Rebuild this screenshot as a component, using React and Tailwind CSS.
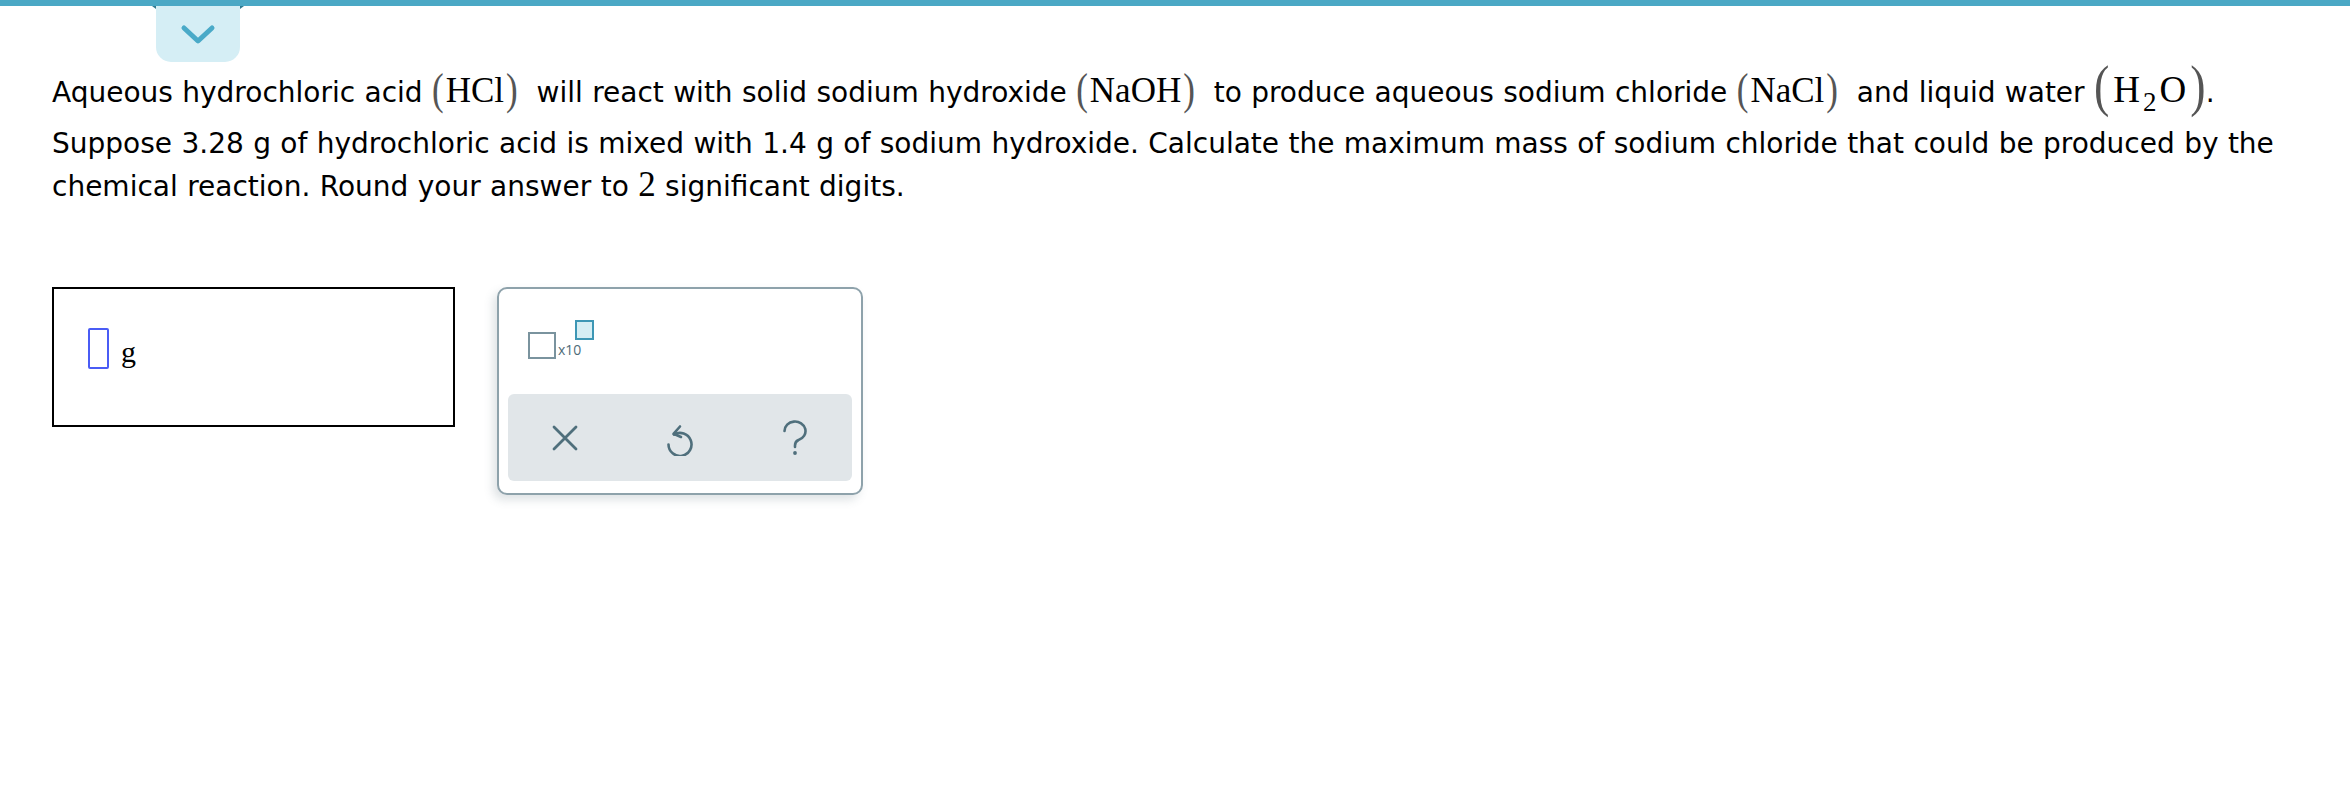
import React from 'react';

const sans = { fontFamily: '"DejaVu Sans", Verdana, sans-serif', wordSpacing: '0.5px' };

// stretched math parenthesis, drawn as text in the math font
const Paren = ({ ch, tall }) => (
  <span
    className={`inline-block leading-[20px] text-[#555] ${tall ? 'text-[46px] scale-y-[1.22] origin-[50%_60%]' : 'scale-y-[1.25] origin-[50%_62%]'}`}
  >
    {ch}
  </span>
);

const Chem = ({ children, tall }) => (
  <span className="font-['Liberation_Serif',serif] text-[35px] leading-none" style={{ wordSpacing: 0 }}>
    <Paren ch="(" tall={tall} />
    <span className={tall ? 'px-[4px] text-[37px] leading-[20px]' : 'px-[2px]'}>{children}</span>
    <Paren ch=")" tall={tall} />
  </span>
);

const TopTab = () => (
  <div className="absolute left-[152px] top-[6px] w-[92px] h-[56px]">
    <svg className="absolute left-0 top-0" width="92" height="3" viewBox="0 0 92 3">
      <polygon points="0,0 92,0 88,3 4,3" fill="#2f7a91" />
    </svg>
    <div className="absolute left-[4px] top-0 w-[84px] h-[56px] bg-[#d5eef5] rounded-b-[15px] flex items-center justify-center">
      <svg width="40" height="24" viewBox="0 0 40 24">
        <polyline points="6,6 20,19 34,6" fill="none" stroke="#4aaac8" strokeWidth="5" strokeLinecap="round" strokeLinejoin="round" />
      </svg>
    </div>
  </div>
);

const ClearIcon = () => (
  <svg width="26" height="26" viewBox="0 0 26 26">
    <path d="M2 2 L24 24 M24 2 L2 24" stroke="#4f6f7c" strokeWidth="2.8" strokeLinecap="round" />
  </svg>
);

const UndoIcon = () => (
  <svg width="30" height="36" viewBox="0 0 30 36">
    <path d="M3.5 24.5 A11.5 11.5 0 1 0 9 14.6" fill="none" stroke="#4f6f7c" strokeWidth="2.6" strokeLinecap="round" />
    <path d="M15 6.5 L8.5 13.8 L16 17" fill="none" stroke="#4f6f7c" strokeWidth="2.6" strokeLinecap="round" strokeLinejoin="round" />
  </svg>
);

const HelpIcon = () => (
  <svg width="26" height="36" viewBox="0 0 26 36">
    <path d="M2.5 11 A10.5 9.5 0 1 1 16.5 20 Q13 21.5 13 25.5 V27" fill="none" stroke="#4f6f7c" strokeWidth="2.6" strokeLinecap="round" />
    <circle cx="13" cy="33" r="1.9" fill="#4f6f7c" />
  </svg>
);

export default function App() {
  return (
    <div className="relative min-h-screen w-[2350px] bg-white text-black" style={sans}>
      <div className="h-[6px] bg-[#4ba8c5]" />
      <TopTab />

      <div className="pl-[52px] pt-[67px]">
        <div className="text-[28px] leading-[38px] whitespace-nowrap">
          Aqueous hydrochloric acid <Chem>HCl</Chem>&nbsp; will react with solid sodium hydroxide <Chem>NaOH</Chem>&nbsp; to
          produce aqueous sodium chloride <Chem>NaCl</Chem>&nbsp; and liquid water{' '}
          <Chem tall>
            H
            <span className="inline-block mx-[3px] text-[27px] leading-[20px] relative top-[9px]">2</span>O
          </Chem>
          .
        </div>

        <div className="mt-[10px] text-[28px] leading-[43px] whitespace-nowrap">
          Suppose 3.28 g of hydrochloric acid is mixed with 1.4 g of sodium hydroxide. Calculate the maximum mass of sodium
          chloride that could be produced by the
          <br />
          chemical reaction. Round your answer to{' '}
          <span className="font-['Liberation_Serif',serif] text-[35px] leading-none">2</span> significant digits.
        </div>

        <div className="mt-[79px] flex items-start gap-[42px]">
          <div className="w-[403px] h-[140px] border-2 border-black flex items-end pl-[34px] pb-[56px]">
            <div className="w-[21px] h-[41px] border-2 border-[#4a5cf5] rounded-[2px]" />
            <span className="ml-3 mb-[2px] font-['Liberation_Serif',serif] text-[30px] leading-none">g</span>
          </div>

          <div className="w-[366px] h-[208px] border-2 border-[#8ea2ab] rounded-[10px] bg-white shadow-[-4px_5px_10px_rgba(80,100,110,0.18)] flex flex-col">
            <div className="h-[105px] pl-[29px] pt-[31px]">
              <div className="flex h-[39px]">
                <div className="self-end w-[28px] h-[27px] border-[2.5px] border-[#7a939e]" />
                <span className="self-end ml-[2px] mb-[2px] text-[14px] leading-none text-[#4e6b78] font-['Open_Sans',sans-serif]">
                  x10
                </span>
                <div className="self-start ml-[-6px] w-[19px] h-[20px] border-[2.5px] border-[#3d97b5] bg-[#d5eef4]" />
              </div>
            </div>
            <div className="mx-[9px] h-[87px] bg-[#e1e6e9] rounded-[6px] grid grid-cols-3 items-center justify-items-center">
              <ClearIcon />
              <UndoIcon />
              <HelpIcon />
            </div>
          </div>
        </div>
      </div>
    </div>
  );
}
